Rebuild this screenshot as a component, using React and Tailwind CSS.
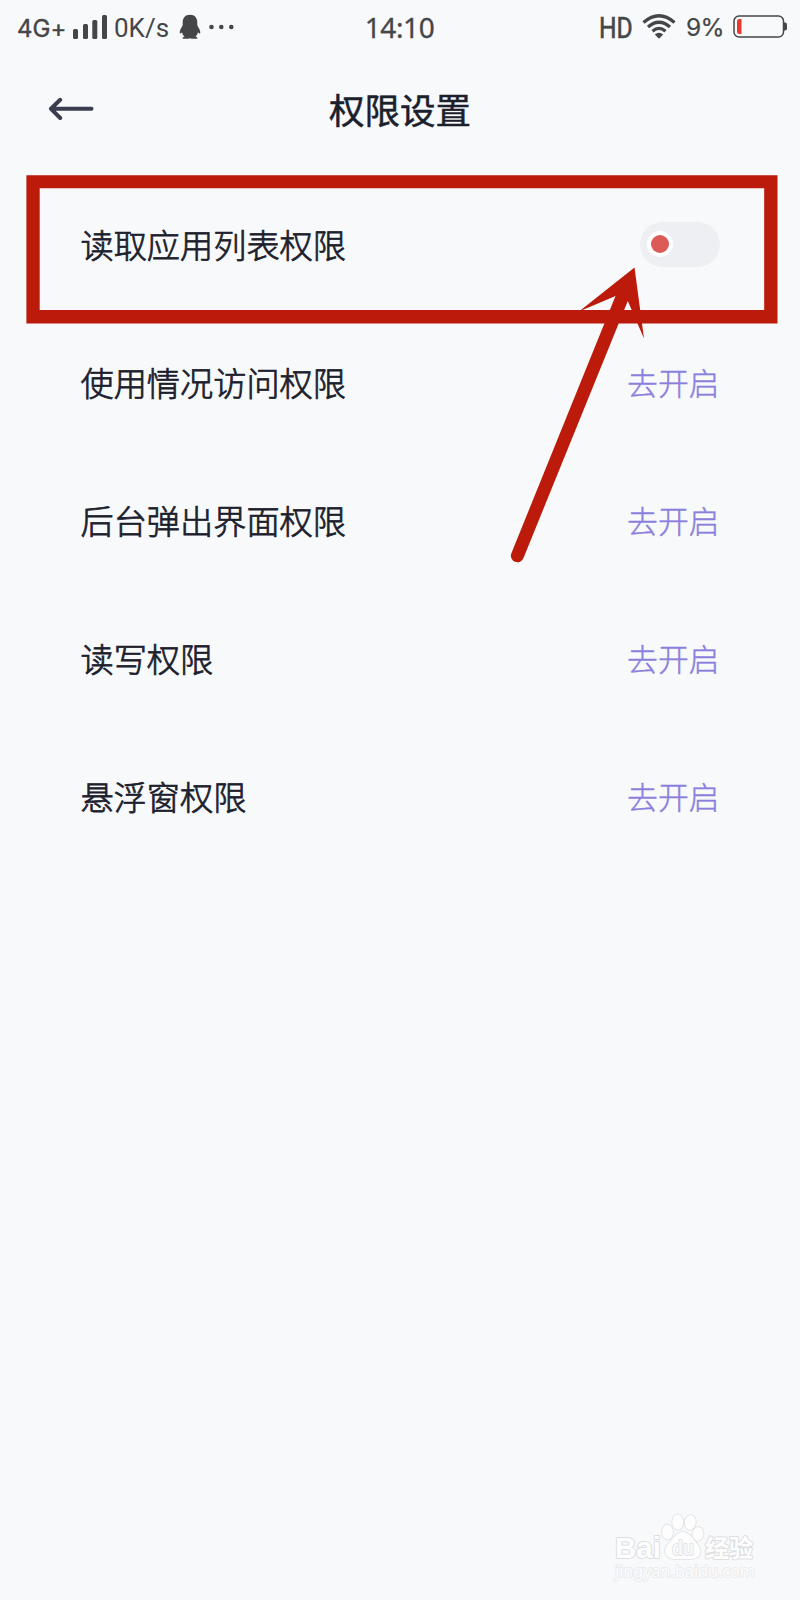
const rows = ['读取应用列表权限', '使用情况访问权限', '后台弹出界面权限', '读写权限', '悬浮窗权限'];

function StatusBar() {
  return (
    <div className="flex h-[55px] w-full items-start justify-between pl-[17px] pr-[12px] text-[#454648]">
      <div className="flex h-full w-[340px] items-start">
        <span className="w-[55px] pt-[14px] font-['Inter'] text-[24px] leading-[29px] tracking-[0.1px] [-webkit-text-stroke:0.4px_#454648]">4G+</span>
        <svg className="mt-[14px] h-[26px] w-[36px] shrink-0" viewBox="0 0 36 26" fill="currentColor">
          <rect x="1" y="15" width="5" height="10" rx="1.5" />
          <rect x="11" y="10" width="5" height="15" rx="1.5" />
          <rect x="20.3" y="6" width="5" height="19" rx="1.5" />
          <rect x="30" y="1" width="5" height="24" rx="1.5" />
        </svg>
        <span className="ml-[6px] w-[65px] pt-[13px] font-['Roboto'] text-[26px] leading-[30px]">0K/s</span>
        <svg className="mt-[14px] h-[26px] w-[22px] shrink-0" viewBox="0 0 22 26" fill="currentColor">
          <path d="M11 .7C6 .7 3.700 4.200 3.700 8.500V11.200C2.300 13.600 .6 16.500 .7 18.800C.8 20 2 19.600 3 18.300C3.400 20.100 4.300 21.600 5.500 22.700C4.300 23 3.500 23.500 3.500 24.200C3.500 25.100 9.500 25 11 24.300C12.500 25 18.500 25.100 18.500 24.200C18.500 23.500 17.700 23 16.500 22.700C17.700 21.600 18.600 20.100 19 18.300C20 19.600 21.200 20 21.300 18.800C21.400 16.500 19.700 13.600 18.300 11.200V8.500C18.300 4.200 16 .7 11 .7Z" />
        </svg>
        <svg className="mt-[24px] ml-[7px] h-[6px] w-[28px] shrink-0" viewBox="0 0 28 6" fill="currentColor">
          <circle cx="3.500" cy="3" r="2.300" />
          <circle cx="13.300" cy="3" r="2.300" />
          <circle cx="23.300" cy="3" r="2.300" />
        </svg>
      </div>
      <span className="-ml-[3px] w-[88px] pt-[7px] text-center font-['Noto_Sans'] text-[28px] leading-[40px] tracking-[-0.4px] [-webkit-text-stroke:0.3px_#454648]">14:10</span>
      <div className="flex h-full w-[343px] items-start justify-end">
        <div className="w-[36px] pt-[11px]">
          <span className="inline-block origin-left scale-x-[0.85] font-['Roboto'] text-[29px] leading-[34px] [-webkit-text-stroke:0.6px_#454648]">HD</span>
        </div>
        <svg className="mt-[14px] ml-[7px] h-[26px] w-[34px] shrink-0" viewBox="0 0 34 26" fill="none" stroke="currentColor" strokeWidth="3.300">
          <path d="M1.500 8.500Q17-5 32.500 8.500M6 13Q17 3.500 28 13M10.500 17.300Q17 11.500 23.500 17.300" />
          <path d="M12.800 20.600Q17 17 21.200 20.600L17 24.800Z" fill="currentColor" stroke="none" />
        </svg>
        <span className="ml-[10px] w-[47px] pt-[12px] font-['Inter'] text-[24.500px] leading-[30px] tracking-[-0.6px] [-webkit-text-stroke:0.2px_#454648]">9%</span>
        <svg className="mt-[14px] h-[26px] w-[55px] shrink-0" viewBox="0 0 55 26" fill="none">
          <rect x="1" y="2" width="49.500" height="21" rx="5" stroke="currentColor" strokeWidth="1.500" />
          <path d="M51 8.500H52Q54 8.500 54 10.500V14.500Q54 16.500 52 16.500H51Z" fill="currentColor" />
          <path d="M8.500 5V20H6.500Q4 20 4 17.500V7.500Q4 5 6.500 5Z" fill="#e8382f" />
        </svg>
      </div>
    </div>
  );
}

function Header() {
  return (
    <header className="flex h-[120.500px] w-full items-start pl-[48px] text-[#1b202c]">
      <svg className="mt-[41px] h-[24px] w-[46px] shrink-0" viewBox="0 0 46 24" fill="none" stroke="#3a3d50" strokeWidth="4" strokeLinecap="round" strokeLinejoin="round">
        <path d="M43.500 12.800H3M12.200 3.800L3 12.800L12.200 22" />
      </svg>
      <h1 className="ml-[235px] pt-[30px] text-[35.500px] leading-[48px] whitespace-nowrap [-webkit-text-stroke:0.5px_#1b202c]">权限设置</h1>
    </header>
  );
}

function Toggle() {
  return (
    <div className="flex h-[45px] w-[80px] items-center rounded-full bg-[#eeeff3] pl-[7px]">
      <div className="flex size-[26px] items-center justify-center rounded-full bg-white">
        <div className="size-[18px] rounded-full bg-[#dc5a58]" />
      </div>
    </div>
  );
}

function Annotation() {
  return (
    <svg className="absolute top-[170px] left-[20px] h-[400px] w-[765px]" viewBox="20 170 765 400" fill="#bc1a0b">
      <path fillRule="evenodd" d="M26.400 175.200H777.500V323.400H26.400ZM39.700 188.300V310.100H764.200V188.300Z" />
      <path d="M634.500 267.500L579 311.500L615.500 296L511.300 553.500A6.500 6.500 0 0 0 523.500 558L627.800 301L644 338.500Z" />
    </svg>
  );
}

function Watermark() {
  return (
    <svg className="absolute top-[1506px] left-[606px] h-[86px] w-[160px]" viewBox="606 1506 160 86" fill="#fdfdfe" stroke="#dedfe2" strokeWidth="1.500" strokeLinejoin="round">
      <g className="[paint-order:stroke]">
        <text x="615" y="1558" textLength="46" lengthAdjust="spacingAndGlyphs" fontFamily="Liberation Sans, sans-serif" fontWeight="bold" fontSize="30" strokeWidth="2">Bai</text>
        <ellipse cx="667.500" cy="1532" rx="5.500" ry="7.500" />
        <ellipse cx="677.700" cy="1522" rx="5.500" ry="7.800" />
        <ellipse cx="690.300" cy="1522.500" rx="5.500" ry="7.500" transform="rotate(8 690 1522)" />
        <ellipse cx="698" cy="1534" rx="5.500" ry="7" transform="rotate(12 698 1534)" />
        <path d="M683 1532C676 1532 673 1539 668 1544C662 1551 666 1559 675 1559H691C700 1559 703 1551 698 1545C693 1539 690 1532 683 1532Z" />
        <text x="672" y="1555" textLength="22" lengthAdjust="spacingAndGlyphs" fill="#f7f9fb" stroke="#dcdde0" fontFamily="Liberation Sans, sans-serif" fontWeight="bold" fontSize="20">du</text>
        <text x="705" y="1557" textLength="48" lengthAdjust="spacingAndGlyphs" fontFamily="Noto Sans CJK SC, sans-serif" fontWeight="bold" fontSize="24" strokeWidth="2">经验</text>
        <text x="615" y="1577" textLength="140" lengthAdjust="spacingAndGlyphs" stroke="#e6e7ea" fontFamily="Noto Sans, sans-serif" fontSize="17">jingyan.baidu.com</text>
      </g>
    </svg>
  );
}

export default function App() {
  return (
    <div className="relative flex h-[1600px] w-[800px] flex-col overflow-hidden bg-[#f7f9fa] font-['Noto_Sans_CJK_SC',sans-serif]">
      <StatusBar />
      <Header />
      <main className="flex flex-col pr-[80.500px] pl-[80.500px]">
        {rows.map((label, i) => (
          <div key={label} className="flex h-[137.800px] items-center justify-between">
            <span className="text-[33.200px] leading-[48px] font-light text-[#1b202c] [-webkit-text-stroke:0.75px_#1b202c]">{label}</span>
            {i === 0 ? <Toggle /> : <span className="text-[30.800px] leading-[46px] font-light text-[#8b7fdd] [-webkit-text-stroke:0.4px_#8b7fdd]">去开启</span>}
          </div>
        ))}
      </main>
      <Annotation />
      <Watermark />
    </div>
  );
}
